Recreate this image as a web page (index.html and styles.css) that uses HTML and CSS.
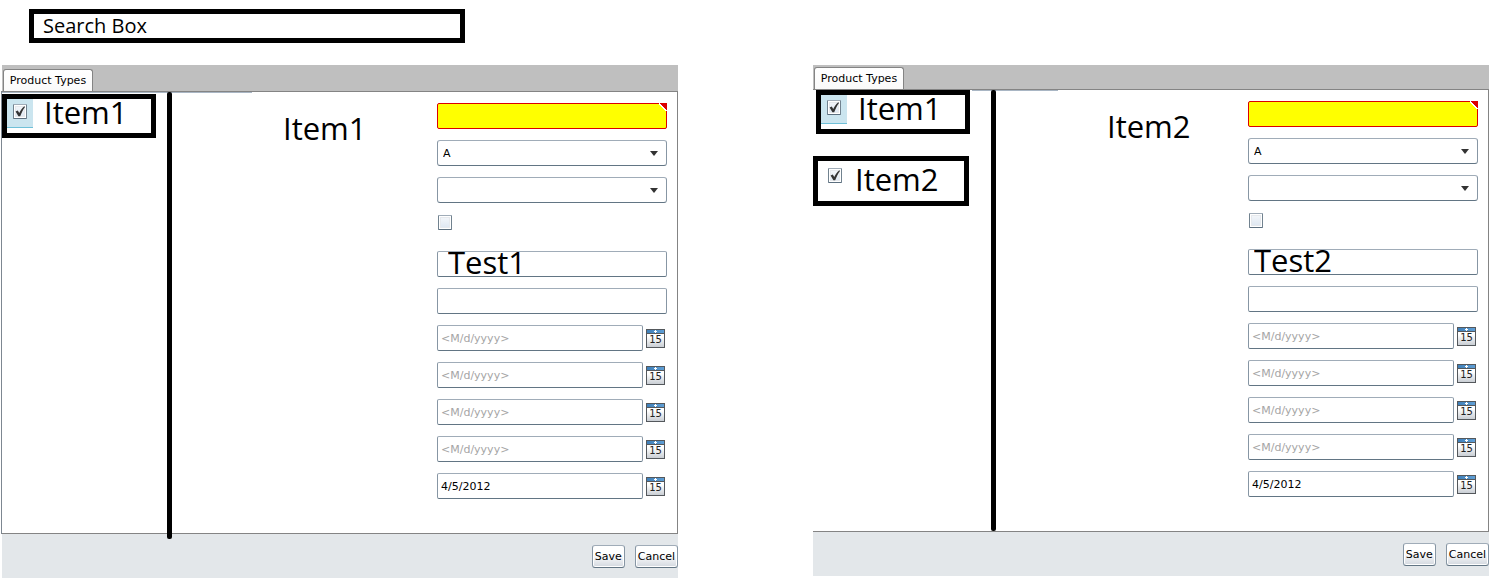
FILE: index.html
```html
<!DOCTYPE html>
<html lang="en">
<head>
    <meta charset="UTF-8">
    <meta name="viewport" content="width=device-width, initial-scale=1.0">
    <title>Product Types</title>
    <link rel="stylesheet" href="styles.css">
</head>
<body>
    <svg class="defs" aria-hidden="true">
        <symbol id="tick" viewBox="0 0 14 15">
            <path d="M2.6 7.4 L4.8 6.6 L6.2 9 C7.4 6.4 8.9 4.2 11.3 2.2 L12 2.9 C10 5.6 8.6 8.6 7.2 12.2 L5.4 12.2 Z" fill="#333"/>
        </symbol>
    </svg>

    <header class="search">
        <input class="search-box" type="text" value="Search Box" aria-label="Search">
    </header>

    <div class="panels">
        <section class="panel panel-first">
            <nav class="tabs"><button class="tab">Product Types</button></nav>
            <div class="content">
                <aside class="items">
                    <label class="item">
                        <span class="cell selected"><span class="check"><input type="checkbox" checked><svg><use href="#tick"/></svg></span></span>
                        <span class="name">Item1</span>
                    </label>
                </aside>
                <div class="divider"></div>
                <main class="details">
                    <h2 class="title">Item1</h2>
                    <form class="fields">
                        <div class="required"><input class="field" type="text" aria-label="Name" required></div>
                        <div class="combo"><select class="field" aria-label="Type"><option>A</option></select></div>
                        <div class="combo"><select class="field" aria-label="Subtype"><option></option></select></div>
                        <div class="row"><span class="check"><input type="checkbox" aria-label="Active"></span></div>
                        <input class="field note" type="text" value="Test1" aria-label="Description">
                        <input class="field" type="text" aria-label="Comment">
                        <div class="date"><input class="field" type="text" placeholder="&lt;M/d/yyyy&gt;" aria-label="Date 1"><button class="cal" type="button">15</button></div>
                        <div class="date"><input class="field" type="text" placeholder="&lt;M/d/yyyy&gt;" aria-label="Date 2"><button class="cal" type="button">15</button></div>
                        <div class="date"><input class="field" type="text" placeholder="&lt;M/d/yyyy&gt;" aria-label="Date 3"><button class="cal" type="button">15</button></div>
                        <div class="date"><input class="field" type="text" placeholder="&lt;M/d/yyyy&gt;" aria-label="Date 4"><button class="cal" type="button">15</button></div>
                        <div class="date"><input class="field" type="text" value="4/5/2012" aria-label="Date 5"><button class="cal" type="button">15</button></div>
                    </form>
                </main>
            </div>
            <footer class="actions">
                <button class="btn">Save</button>
                <button class="btn">Cancel</button>
            </footer>
        </section>

        <section class="panel panel-second">
            <nav class="tabs"><button class="tab">Product Types</button></nav>
            <div class="content">
                <aside class="items">
                    <label class="item">
                        <span class="cell selected"><span class="check"><input type="checkbox" checked><svg><use href="#tick"/></svg></span></span>
                        <span class="name">Item1</span>
                    </label>
                    <label class="item item-new">
                        <span class="cell"><span class="check"><input type="checkbox" checked><svg><use href="#tick"/></svg></span></span>
                        <span class="name">Item2</span>
                    </label>
                </aside>
                <div class="divider"></div>
                <main class="details">
                    <h2 class="title">Item2</h2>
                    <form class="fields">
                        <div class="required"><input class="field" type="text" aria-label="Name" required></div>
                        <div class="combo"><select class="field" aria-label="Type"><option>A</option></select></div>
                        <div class="combo"><select class="field" aria-label="Subtype"><option></option></select></div>
                        <div class="row"><span class="check"><input type="checkbox" aria-label="Active"></span></div>
                        <input class="field note" type="text" value="Test2" aria-label="Description">
                        <input class="field" type="text" aria-label="Comment">
                        <div class="date"><input class="field" type="text" placeholder="&lt;M/d/yyyy&gt;" aria-label="Date 1"><button class="cal" type="button">15</button></div>
                        <div class="date"><input class="field" type="text" placeholder="&lt;M/d/yyyy&gt;" aria-label="Date 2"><button class="cal" type="button">15</button></div>
                        <div class="date"><input class="field" type="text" placeholder="&lt;M/d/yyyy&gt;" aria-label="Date 3"><button class="cal" type="button">15</button></div>
                        <div class="date"><input class="field" type="text" placeholder="&lt;M/d/yyyy&gt;" aria-label="Date 4"><button class="cal" type="button">15</button></div>
                        <div class="date"><input class="field" type="text" value="4/5/2012" aria-label="Date 5"><button class="cal" type="button">15</button></div>
                    </form>
                </main>
            </div>
            <footer class="actions">
                <button class="btn">Save</button>
                <button class="btn">Cancel</button>
            </footer>
        </section>
    </div>
</body>
</html>
```
FILE: styles.css
```css
* {
    box-sizing: border-box;
}
body {
    margin: 0;
    background: #fff;
    color: #000;
    font-family: "DejaVu Sans", Verdana, sans-serif;
    font-size: 11px;
}
input, select, button {
    font: inherit;
    color: inherit;
    margin: 0;
}
.defs {
    position: absolute;
    width: 0;
    height: 0;
}

/* Search */
.search {
    padding: 9px 29px 22px;
}
.search-box {
    display: block;
    width: 436px;
    max-width: 100%;
    height: 34px;
    padding: 0 9px 2px;
    border: 5px solid #000;
    background: #fff;
    font-family: "Open Sans", sans-serif;
    font-size: 20px;
}

/* Panels */
.panels {
    display: grid;
    grid-template-columns: 1fr 1fr;
    align-items: start;
    gap: 135px;
    padding: 0 1px 0 2px;
}
.tabs {
    display: flex;
    align-items: flex-end;
    height: 26px;
    padding-left: 1px;
    background: #bfbfbf;
}
.tab {
    width: 90px;
    height: 22px;
    padding: 0;
    border: 1px solid #848484;
    border-bottom: none;
    border-radius: 3px 3px 0 0;
    background: linear-gradient(#fff, #fafafa);
}
.content {
    display: flex;
    border: 1px solid #848484;
    border-left: none;
    background: linear-gradient(#a9b6c4, #a9b6c4) no-repeat 0 0 / 250px 1px;
}
.panel-first .content {
    box-shadow: -1px 0 #7d8791;
}
.panel-second .tabs {
    height: 24px;
}
.panel-second .content {
    background-position: 159px 0;
    background-size: 86px 1px;
}

/* Item list */
.items {
    flex: none;
    width: 165px;
    padding-top: 2px;
}
.panel-second .items {
    width: 178px;
    padding-top: 0;
}
.item {
    display: flex;
    width: 154px;
    height: 44px;
    border: 5px solid #000;
    background: #fff;
}
.panel-second .item {
    margin-left: 3px;
}
.panel-second .item-new {
    width: 156px;
    height: 50px;
    margin: 22px 0 0;
    padding-top: 5px;
}
.cell {
    flex: none;
    width: 26px;
    height: 29px;
    padding: 5px 6px;
    border-bottom: 1px solid transparent;
}
.item-new .cell {
    padding: 2px 0 0 10px;
}
.selected {
    background: #cbe5ef;
    border-bottom-color: #6fc0d8;
}
.name, .title {
    font-family: "Open Sans", sans-serif;
    font-size: 31px;
    font-weight: 400;
    line-height: 26px;
}
.name {
    padding-left: 11px;
}
.divider {
    flex: none;
    width: 5px;
    border-radius: 2px;
    background: #000;
}
.panel-first .divider {
    margin-bottom: -6px;
    z-index: 1;
}

/* Details */
.details {
    display: flex;
    flex: 1;
    justify-content: space-between;
    padding: 11px 10px 34px 111px;
}
.title {
    margin: 12px 0 0;
}
.fields {
    display: flex;
    flex-direction: column;
    gap: 11px;
    width: 230px;
}
.field {
    display: block;
    width: 100%;
    height: 26px;
    padding: 0 3px;
    border: 1px solid;
    border-color: #a0acb8 #8796a4 #627584;
    border-radius: 2px;
    background: #fff;
}
.field::placeholder {
    color: #a5a5a5;
    opacity: 1;
}
.required, .combo {
    position: relative;
}
.required .field {
    border-color: #dc0000;
    background: #ff0;
}
/* Red validation corner with a white edge */
.required::after {
    content: "";
    position: absolute;
    top: 0;
    right: 0;
    width: 8px;
    height: 8px;
    background: linear-gradient(45deg, transparent 42%, #fff 42%, #fff 56%, #dc0000 56%);
}
.combo .field {
    appearance: none;
    padding: 0 5px;
    border-radius: 3px;
}
.combo::after {
    content: "";
    position: absolute;
    top: 11px;
    right: 9px;
    border: 4px solid transparent;
    border-top: 5px solid #333;
    border-bottom: none;
    pointer-events: none;
}
.row {
    height: 26px;
    padding: 1px;
}
.check {
    display: grid;
    width: 14px;
    height: 15px;
}
.check input, .check svg {
    grid-area: 1 / 1;
    width: 14px;
    height: 15px;
}
.check svg {
    pointer-events: none;
}
.check input {
    appearance: none;
    border: 1px solid;
    border-color: #a0acb8 #71828f #5c6f7f;
    border-radius: 1px;
    background: linear-gradient(#f6f8fb, #dbe5f0);
    box-shadow: inset 0 0 0 1px #fff, inset 0 0 0 2px #e6e9ed;
}
.field.note {
    padding: 0 10px 4px;
    font-family: "Open Sans", sans-serif;
    font-size: 31px;
    line-height: 20px;
}
.panel-second .field.note {
    padding: 0 5px 4px;
}
.date {
    display: flex;
    align-items: center;
    gap: 3px;
    padding-right: 2px;
}
.date .field {
    flex: 1;
    min-width: 0;
}
/* Calendar page: blue binding strip with a white ring, day below */
.cal {
    flex: none;
    width: 19px;
    height: 19px;
    padding: 4px 0 0;
    border: 1px solid #54585c;
    background:
        linear-gradient(#fff, #fff) no-repeat 8px 0 / 1px 3px,
        linear-gradient(#fff, #fff) no-repeat 7px 1px / 3px 1px,
        linear-gradient(#54585c, #54585c) no-repeat 0 3px / 100% 1px,
        linear-gradient(90deg, #3f7fb8, #5f9fd6) no-repeat 0 0 / 100% 3px,
        linear-gradient(#fff 40%, #c9ced4);
    color: #222;
    font-size: 10px;
    line-height: 12px;
}

/* Footer */
.actions {
    display: flex;
    justify-content: flex-end;
    gap: 10px;
    padding: 11px 0 10px;
    background: #e3e7ea;
}
.btn {
    height: 23px;
    padding: 0 2px;
    border: 1px solid;
    border-color: #a0acb8 #8796a4 #627584;
    border-radius: 3px;
    background: linear-gradient(#fff 40%, #d3d8df);
    box-shadow: inset 0 0 0 1px #fff;
}
```
